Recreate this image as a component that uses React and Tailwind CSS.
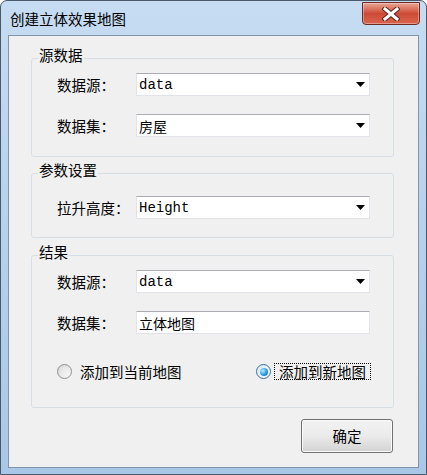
import React from "react";

const cjk = { fontFamily: '"Noto Sans CJK SC", "Noto Sans", sans-serif' };
const mono = { fontFamily: '"Liberation Mono", "Noto Sans CJK SC", monospace' };

const Arrow = () => (
  <svg width="9" height="5" viewBox="0 0 9 5" className="ml-auto mr-[4px]">
    <polygon points="0,0 9,0 4.5,5" fill="#000" />
  </svg>
);

const Field = ({ value, combo, ascii }) => (
  <div className="w-[234px] h-[23px] bg-white border border-[#e2e3ea] border-t-[#abadb3] flex items-center pl-[2px]">
    <span className="text-[14px] leading-[20px] text-black" style={ascii ? mono : cjk}>
      {value}
    </span>
    {combo && <Arrow />}
  </div>
);

const Row = ({ label, value, combo = true, ascii = false, className = "" }) => (
  <div className={"flex items-center pl-[25px] " + className}>
    <span className="w-[79px] text-[14.5px] leading-[20px] text-black">{label}</span>
    <Field value={value} combo={combo} ascii={ascii} />
  </div>
);

const Group = ({ title, className = "", children }) => (
  <div className={"relative ml-[22px] mr-[24px] border border-[#d5dfe5] rounded-[3px] " + className}>
    <span className="absolute left-[6px] -top-[14px] px-[1px] bg-[#f0f0f0] text-[14.5px] leading-[20px] text-black">
      {title}
    </span>
    {children}
  </div>
);

export default function App() {
  return (
    <div
      className="w-[427px] h-[475px] flex flex-col rounded-t-[7px] border border-[#4a5868] bg-gradient-to-b from-[#c6dcf2] via-[#b6d1ec] to-[#a9c7e6] overflow-hidden"
      style={cjk}
    >
      {/* title bar */}
      <div className="h-[34px] flex items-start">
        <span className="pl-[9px] pt-[7px] text-[14.5px] leading-[22px] text-black">创建立体效果地图</span>
        <div className="ml-auto mr-[6px] mt-[1px] w-[58px] h-[23px] rounded-b-[4px] border border-[#6e2a22] bg-gradient-to-b from-[#e8a494] via-[#cd4a36] to-[#d8644d] flex items-center justify-center shadow-[inset_0_0_0_1px_rgba(255,255,255,0.35)]">
          <svg width="18" height="14" viewBox="0 0 18 14">
            <path d="M3 2 L15 12 M15 2 L3 12" stroke="#5a2620" strokeWidth="5" strokeLinecap="square" />
            <path d="M3 2 L15 12 M15 2 L3 12" stroke="#fff" strokeWidth="3" strokeLinecap="square" />
          </svg>
        </div>
      </div>

      {/* client area */}
      <div className="mx-[7px] flex-1 border border-[#7f95ab] bg-[#f0f0f0] flex flex-col">
        <Group title="源数据" className="mt-[22px] pt-[14px] pb-[19px]">
          <Row label="数据源：" value="data" ascii />
          <Row label="数据集：" value="房屋" className="mt-[18px]" />
        </Group>

        <Group title="参数设置" className="mt-[16px] pt-[22px] pb-[18px]">
          <Row label="拉升高度：" value="Height" ascii />
        </Group>

        <Group title="结果" className="mt-[17px] pt-[14px] pb-[27px]">
          <Row label="数据源：" value="data" ascii />
          <Row label="数据集：" value="立体地图" combo={false} className="mt-[18px]" />
          <div className="mt-[29px] h-[17px] flex items-center justify-between pl-[25px] pr-[22px]">
            <div className="flex items-center">
              <div className="w-[15px] h-[15px] rounded-full border border-[#8f8f8f] bg-gradient-to-br from-[#d4d4d4] to-[#fbfbfb] flex items-center justify-center">
                <div className="w-[9px] h-[9px] rounded-full bg-gradient-to-br from-[#e2e2e2] to-[#f6f6f6]" />
              </div>
              <span className="ml-[8px] text-[14.5px] leading-[20px] text-black">添加到当前地图</span>
            </div>
            <div className="flex items-center">
              <div className="w-[15px] h-[15px] rounded-full border border-[#3d6f9e] bg-gradient-to-br from-[#d8e8f4] to-[#fbfdff] flex items-center justify-center">
                <div className="w-[8px] h-[8px] rounded-full bg-[radial-gradient(circle_at_35%_35%,#b6ecff,#2a9ce0_55%,#0b4d8c)]" />
              </div>
              <span className="ml-[3px] px-[4px] h-[17px] border border-dotted border-black text-[14.5px] leading-[15px] text-black">
                添加到新地图
              </span>
            </div>
          </div>
        </Group>

        <div className="flex justify-end mr-[25px] mt-[11px]">
          <button className="w-[92px] h-[34px] rounded-[3px] border border-[#707070] bg-gradient-to-b from-[#f2f2f2] via-[#ebebeb] to-[#d2d2d2] shadow-[inset_0_0_0_1px_#fcfcfc] text-[14.5px] text-black">
            确定
          </button>
        </div>
      </div>
      <div className="h-[6px]" />
    </div>
  );
}
